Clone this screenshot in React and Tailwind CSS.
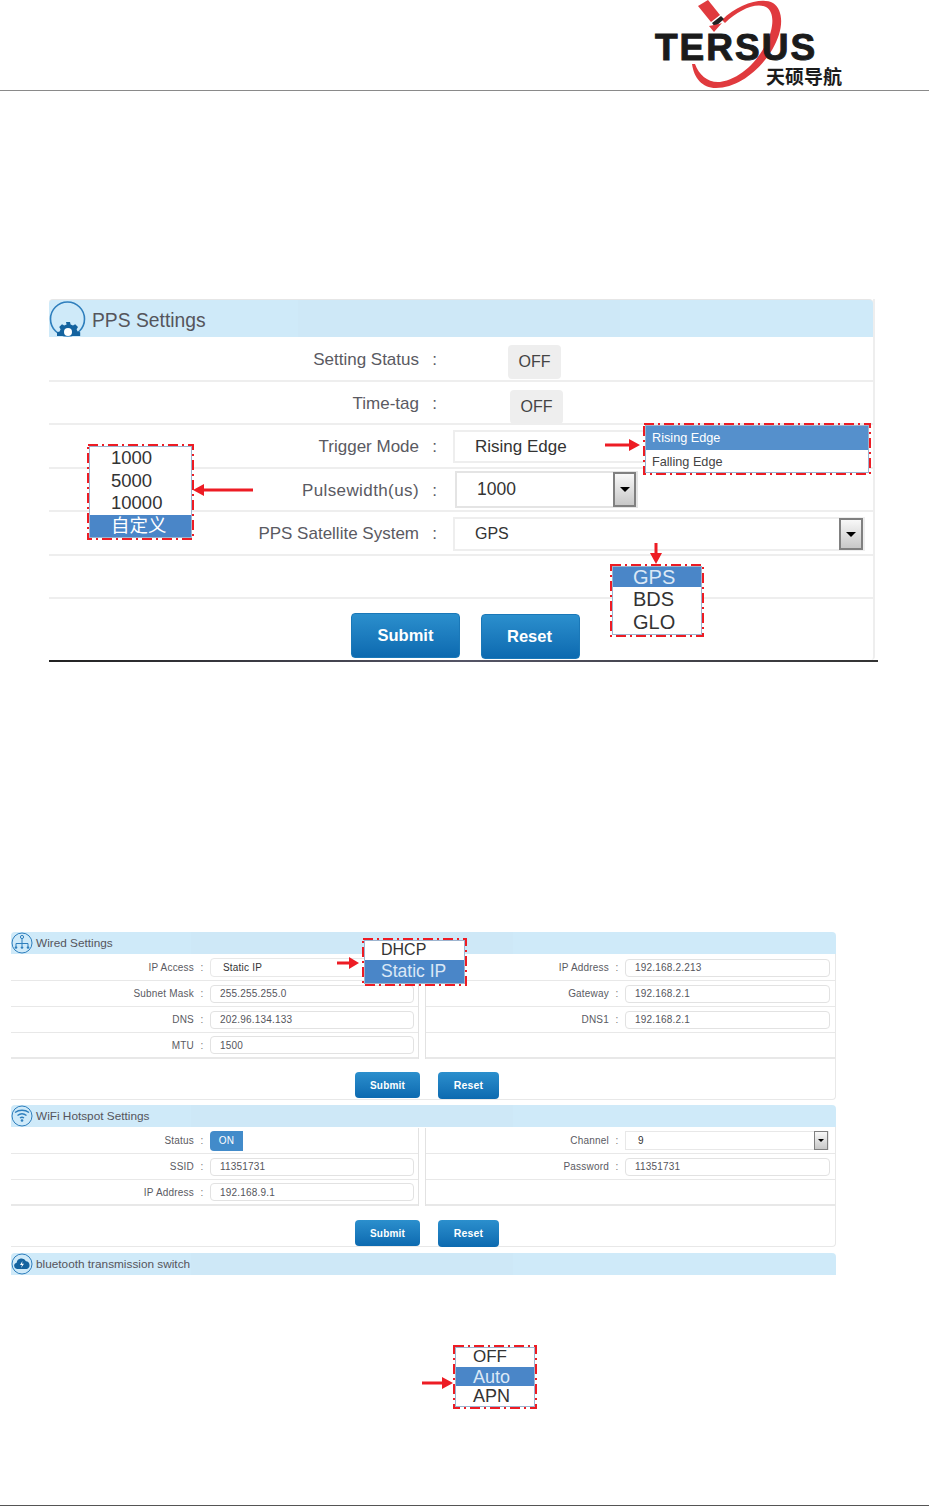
import React from 'react'

// Logo: satellite, swoosh and wordmark
function Logo() {
  return (
    <svg width="200" height="90" viewBox="650 0 200 90" className="block">
      <path d="M722 20 C738 4 762 -3 773 3 C785 11 783 32 772 50 C760 70 738 88 716 88 C702 88 694 78 692 64 L695 64 C699 75 708 83 720 82 C740 79 757 62 766 44 C774 28 775 12 766 7 C756 2 738 10 725 23 Z" fill="#e03a3e" />
      <path d="M698 6 L708 0 L720 15 L711 22 Z" fill="#e03a3e" />
      <path d="M712 23 L721 16 L724 19 L715 27 Z" fill="#222" />
      <path d="M709 26 L719 24 L722 23 L714 32 Z" fill="#e03a3e" />
      <text x="655" y="60" className="font-['Liberation_Sans',sans-serif]" fontWeight="700" fontSize="37" letterSpacing="2" stroke="#1b1b1b" strokeWidth="1" fill="#1b1b1b">TERSUS</text>
      <text x="766" y="84" className="font-['Noto_Sans_CJK_SC',sans-serif]" fontWeight="700" fontSize="19" fill="#1b1b1b">天硕导航</text>
    </svg>
  )
}

function GearIcon() {
  return (
    <svg width="37" height="38" viewBox="0 0 37 38" className="shrink-0">
      <circle cx="18.5" cy="19" r="17" fill="none" stroke="#2f7fbd" strokeWidth="1.6" />
      <g fill="#14639f">
        <path d="M17 22h4l.6 2.6 2.4 1 2.2-1.4 2.8 2.8-1.4 2.2 1 2.4 2.6.6V36H8v-3.8l2.6-.6 1-2.4-1.4-2.2 2.8-2.8 2.2 1.4 2.4-1z" />
      </g>
      <circle cx="19" cy="32" r="4" fill="#fff" />
    </svg>
  )
}

function NetIcon() {
  return (
    <svg width="22" height="22" viewBox="0 0 22 22" className="shrink-0">
      <circle cx="11" cy="11" r="10" fill="none" stroke="#2f7fbd" strokeWidth="1" />
      <circle cx="11" cy="5" r="1.6" fill="none" stroke="#2f7fbd" />
      <path d="M11 7v7M5 14.5v-3h12v3" fill="none" stroke="#2f7fbd" />
      <circle cx="5" cy="15.5" r="1.3" fill="#2f7fbd" />
      <circle cx="11" cy="15.5" r="1.3" fill="#2f7fbd" />
      <circle cx="17" cy="15.5" r="1.3" fill="#2f7fbd" />
    </svg>
  )
}

function WifiIcon() {
  return (
    <svg width="22" height="22" viewBox="0 0 22 22" className="shrink-0">
      <circle cx="11" cy="11" r="10" fill="none" stroke="#2f7fbd" strokeWidth="1" />
      <path d="M4 7.5c4-3 10-3 14 0M6.5 10.5c2.700-2 6.300-2 9 0M9 13c1.200-.9 2.800-.9 4 0" fill="none" stroke="#2f7fbd" strokeWidth="1.400" />
      <circle cx="11" cy="15.500" r="1.300" fill="#2f7fbd" />
    </svg>
  )
}

function CloudIcon() {
  return (
    <svg width="22" height="22" viewBox="0 0 22 22" className="shrink-0">
      <circle cx="11" cy="11" r="10" fill="none" stroke="#2f7fbd" strokeWidth="1" />
      <path d="M6 16a3.200 3.200 0 0 1-.4-6.300A5 5 0 0 1 15 8.300 4 4 0 0 1 16 16z" fill="#14639f" />
      <path d="M11.500 8l-2.500 4h2l-1 3 3-4.200h-2z" fill="#fff" />
    </svg>
  )
}

function Arrow({ className, w, h, d }) {
  return (
    <svg width={w} height={h} viewBox={`0 0 ${w} ${h}`} className={className}>
      <path d={d} fill="#ed1c24" />
    </svg>
  )
}

// red dash-dot frame around a dropdown crop
function Callout({ className, w, h, children }) {
  return (
    <div className={className}>
      <div className="absolute inset-[2px] bg-white border border-[#9db4cf] overflow-hidden">{children}</div>
      <svg className="absolute inset-0 w-full h-full">
        <rect x="1" y="1" width={w - 2} height={h - 2} fill="none" stroke="#ed1c24" strokeWidth="2" strokeDasharray="10 4 2 4" />
      </svg>
    </div>
  )
}

function DropBtn({ className, small }) {
  return (
    <span className={className}>
      <span className={small ? 'w-0 h-0 border-x-[3px] border-x-transparent border-t-[3px] border-t-black' : 'w-0 h-0 border-x-[5px] border-x-transparent border-t-[5px] border-t-black'} />
    </span>
  )
}

function PpsRow({ label, className, labelClass = '', children }) {
  return (
    <div className={`flex items-center border-b-2 border-[#eeeeee] ${className}`}>
      <div className={`w-[370px] pt-[2px] text-right text-[17px] text-[#5a5a62] whitespace-nowrap ${labelClass}`}>{label}</div>
      <div className="w-[31px] pt-[2px] text-center text-[17px] text-[#5a5a62]">:</div>
      {children}
    </div>
  )
}

function OffBtn({ className }) {
  return (
    <div className={`h-[34px] w-[53px] rounded bg-[#eeeeee] flex items-center justify-center text-[16px] text-[#444] ${className}`}>OFF</div>
  )
}

function PpsPanel() {
  return (
    <div className="ml-[49px] w-[826px] mt-[208px] h-[361px] border-r-2 border-[#eeeeee] rounded-br">
      <div className="h-[38px] flex items-center bg-[linear-gradient(to_right,#cfeaf9_0,#cfeaf9_249px,#cee8f7_249px,#cee8f7_571px,#cfeaf9_571px)] border-t border-[#e6e6e6] rounded-t">
        <GearIcon />
        <span className="ml-[6px] pt-[5px] text-[19.300px] text-[#55555c]">PPS Settings</span>
      </div>
      <PpsRow label="Setting Status" className="h-[45px]"><OffBtn className="ml-[58px] mt-[7px]" /></PpsRow>
      <PpsRow label="Time-tag" className="h-[43px]"><OffBtn className="ml-[60px] mt-[9px]" /></PpsRow>
      <PpsRow label="Trigger Mode" className="h-[44px]">
        <div className="ml-[3px] mt-[1px] h-[33px] w-[200px] border-2 border-[#eeeeee] flex items-center pl-[20px] text-[17px] text-[#333]">Rising Edge</div>
      </PpsRow>
      <PpsRow label="Pulsewidth(us)" labelClass="tracking-[0.4px]" className="h-[43px]">
        <div className="ml-[5px] h-[37px] w-[183px] border-2 border-[#e4e4e4] flex items-center justify-between pl-[20px] text-[17.500px] text-[#333]">
          1000
          <DropBtn className="h-[35px] w-[23px] border-2 border-[#808080] bg-gradient-to-b from-[#f8f8f8] to-[#c8c8c8] flex items-center justify-center" />
        </div>
      </PpsRow>
      <PpsRow label="PPS Satellite System" className="h-[44px]">
        <div className="ml-[3px] mt-[2px] h-[34px] w-[412px] border-2 border-[#eeeeee] flex items-center justify-between pl-[20px] text-[16px] text-[#333]">
          GPS
          <DropBtn className="h-[32px] w-[24px] border-2 border-[#808080] bg-gradient-to-b from-[#f8f8f8] to-[#c8c8c8] flex items-center justify-center" />
        </div>
      </PpsRow>
      <div className="h-[43px] border-b-2 border-[#eeeeee]" />
      <div className="flex items-start pt-[14px] pl-[302px] gap-[21px]">
        <button className="h-[45px] w-[109px] rounded bg-gradient-to-b from-[#2b8fcd] to-[#0c6ab0] border border-[#1a78b8] text-white font-bold text-[16.500px]">Submit</button>
        <button className="mt-[1px] h-[45px] w-[99px] pr-[2px] rounded bg-gradient-to-b from-[#2b8fcd] to-[#0c6ab0] border border-[#1a78b8] text-white font-bold text-[16.500px]">Reset</button>
      </div>
    </div>
  )
}

function Title({ icon, children }) {
  return (
    <div className="h-[22px] flex items-center rounded-t bg-[linear-gradient(to_right,#cfeaf9_0,#cfeaf9_180px,#cee8f7_180px,#cee8f7_502px,#cfeaf9_502px)]">
      {icon}
      <span className="ml-[3px] pt-[1px] text-[11.800px] text-[#55555c]">{children}</span>
    </div>
  )
}

function Field({ value }) {
  return <div className="h-[18px] rounded-sm border border-[#e2e2e2] flex items-center pl-[9px] text-[#55555c] w-full">{value}</div>
}

function CellRow({ label, last, fieldW, children }) {
  return (
    <div className={`h-[26px] flex items-center border-b ${last ? 'border-b-2' : ''} border-[#e8e8e8]`}>
      <div className="w-[183px] text-right text-[#5a5a62] whitespace-nowrap">{label}</div>
      <div className="w-[16px] text-center text-[#777]">:</div>
      <div className={fieldW}>{children}</div>
    </div>
  )
}

function LanPanel({ icon, title, left, right, marginTop, height, btnPad }) {
  return (
    <div className={`ml-[11px] w-[825px] ${marginTop}`}>
      <Title icon={icon}>{title}</Title>
      <div className={`${height} border-r border-b border-[#e8e8e8] rounded-br tracking-[0.2px] text-[10px]`}>
        <div className="flex pt-[1px]">
          <div className="w-[408px] border-r border-[#e2e2e2]">
            {left.map((r, i) => (
              <CellRow key={r.label} label={r.label} fieldW="w-[204px]" last={i === left.length - 1}>{r.node || <Field value={r.value} />}</CellRow>
            ))}
          </div>
          <div className="ml-[6px] w-[410px] border-l border-[#e2e2e2]">
            {right.map((r, i) => (
              r.label
                ? <CellRow key={r.label} label={r.label} fieldW="w-[205px]" last={i === right.length - 1}>{r.node || <Field value={r.value} />}</CellRow>
                : <div key={i} className="h-[26px] border-b-2 border-[#e8e8e8]" />
            ))}
          </div>
        </div>
        <div className={`flex items-start pl-[344px] gap-[18px] ${btnPad}`}>
          <button className="h-[26px] w-[65px] pt-[1px] rounded-sm bg-gradient-to-b from-[#2b8fcd] to-[#0c6ab0] text-white font-bold text-[10px]">Submit</button>
          <button className="h-[27px] w-[61px] pt-[1px] rounded-sm bg-gradient-to-b from-[#2b8fcd] to-[#0c6ab0] text-white font-bold text-[10.500px]">Reset</button>
        </div>
      </div>
    </div>
  )
}

const wiredLeft = [
  { label: 'IP Access', node: <div className="h-[19px] rounded-sm border border-[#e8e8e8] flex items-center pl-[12px] text-[#333]">Static IP</div> },
  { label: 'Subnet Mask', value: '255.255.255.0' },
  { label: 'DNS', value: '202.96.134.133' },
  { label: 'MTU', value: '1500' },
]
const wiredRight = [
  { label: 'IP Address', value: '192.168.2.213' },
  { label: 'Gateway', value: '192.168.2.1' },
  { label: 'DNS1', value: '192.168.2.1' },
  {},
]
const wifiLeft = [
  { label: 'Status', node: <div className="h-[20px] w-[33px] rounded-l-sm bg-[#428bca] text-white flex items-center justify-center">ON</div> },
  { label: 'SSID', value: '11351731' },
  { label: 'IP Address', value: '192.168.9.1' },
]
const wifiRight = [
  { label: 'Channel', node: (
    <div className="h-[19px] mr-[1px] border border-[#e8e8e8] flex items-center justify-between pl-[12px] text-[#333]">
      9
      <DropBtn small className="h-[19px] w-[14px] border border-[#808080] bg-gradient-to-b from-[#f8f8f8] to-[#c8c8c8] flex items-center justify-center" />
    </div>
  ) },
  { label: 'Password', value: '11351731' },
  {},
]

export default function App() {
  return (
    <div className="relative h-[1506px] w-[929px] bg-white overflow-hidden font-['Liberation_Sans','Noto_Sans_CJK_SC',sans-serif]">
      <header className="h-[91px] border-b border-[#8a8a8a] flex justify-end">
        <div className="mr-[79px]"><Logo /></div>
      </header>

      <PpsPanel />
      <div className="ml-[49px] w-[829px] h-[2px] bg-gradient-to-r from-[#222] via-[#556] to-[#333]" />

      <LanPanel icon={<NetIcon />} title="Wired Settings" left={wiredLeft} right={wiredRight} marginTop="mt-[270px]" height="h-[146px]" btnPad="pt-[13px]" />
      <LanPanel icon={<WifiIcon />} title="WiFi Hotspot Settings" left={wifiLeft} right={wifiRight} marginTop="mt-[5px]" height="h-[120px]" btnPad="pt-[14px]" />
      <div className="ml-[11px] w-[825px] mt-[6px]">
        <Title icon={<CloudIcon />}>bluetooth transmission switch</Title>
      </div>

      <div className="mt-[230px] h-px bg-[#555]" />

      {/* annotation overlays */}
      <Callout className="absolute left-[87px] top-[444px] w-[107px] h-[96px]" w={107} h={96}>
        <div className="pl-[21px] text-[18.500px] leading-[22.500px] text-[#333]">
          <div>1000</div>
          <div>5000</div>
          <div>10000</div>
        </div>
        <div className="h-[22.500px] bg-[#4a86c8] text-white text-[18.500px] leading-[22.500px] pl-[21px]">自定义</div>
      </Callout>
      <Arrow className="absolute left-[193px] top-[484px]" w={61} h={12} d="M0 6 L11 0 V4.500 H60 V7.500 H11 V12 Z" />

      <Callout className="absolute left-[643px] top-[423px] w-[228px] h-[52px]" w={228} h={52}>
        <div className="h-[24px] bg-[#5590cc] text-white text-[12.700px] leading-[24px] pl-[6px]">Rising Edge</div>
        <div className="h-[24px] text-[#444] text-[12.700px] leading-[24px] pl-[6px]">Falling Edge</div>
      </Callout>
      <Arrow className="absolute left-[605px] top-[439px]" w={35} h={12} d="M0 4.500 H24 V0 L35 6 L24 12 V7.500 H0 Z" />

      <Callout className="absolute left-[610px] top-[564px] w-[94px] h-[73px]" w={94} h={73}>
        <div className="h-[20px] bg-[#4a86c8] text-[#dbe8f6] text-[20px] leading-[20px] pl-[20px]">GPS</div>
        <div className="h-[23px] text-[#333] text-[20px] leading-[25px] pl-[20px]">BDS</div>
        <div className="h-[23px] text-[#333] text-[20px] leading-[25px] pl-[20px]">GLO</div>
      </Callout>
      <Arrow className="absolute left-[650px] top-[543px]" w={12} h={21} d="M4.500 0 H7.500 V10 H12 L6 21 L0 10 H4.500 Z" />

      <Callout className="absolute left-[362px] top-[938px] w-[105px] h-[48px]" w={105} h={48}>
        <div className="h-[19px] text-[#333] text-[16px] leading-[18px] pl-[16px]">DHCP</div>
        <div className="h-[24px] bg-[#4a86c8] text-[#dbe8f6] text-[17.500px] leading-[22px] pl-[16px]">Static IP</div>
      </Callout>
      <Arrow className="absolute left-[337px] top-[957px]" w={22} h={12} d="M0 4.500 H12 V0 L22 6 L12 12 V7.500 H0 Z" />

      <Callout className="absolute left-[453px] top-[1345px] w-[84px] h-[64px]" w={84} h={64}>
        <div className="h-[19px] text-[#333] text-[17px] leading-[18px] pl-[17px]">OFF</div>
        <div className="h-[19px] bg-[#4a86c8] text-[#dbe8f6] text-[18px] leading-[21px] pl-[17px]">Auto</div>
        <div className="h-[20px] text-[#333] text-[18px] leading-[20px] pl-[17px]">APN</div>
      </Callout>
      <Arrow className="absolute left-[422px] top-[1377px]" w={31} h={12} d="M0 4.500 H20 V0 L31 6 L20 12 V7.500 H0 Z" />
    </div>
  )
}
